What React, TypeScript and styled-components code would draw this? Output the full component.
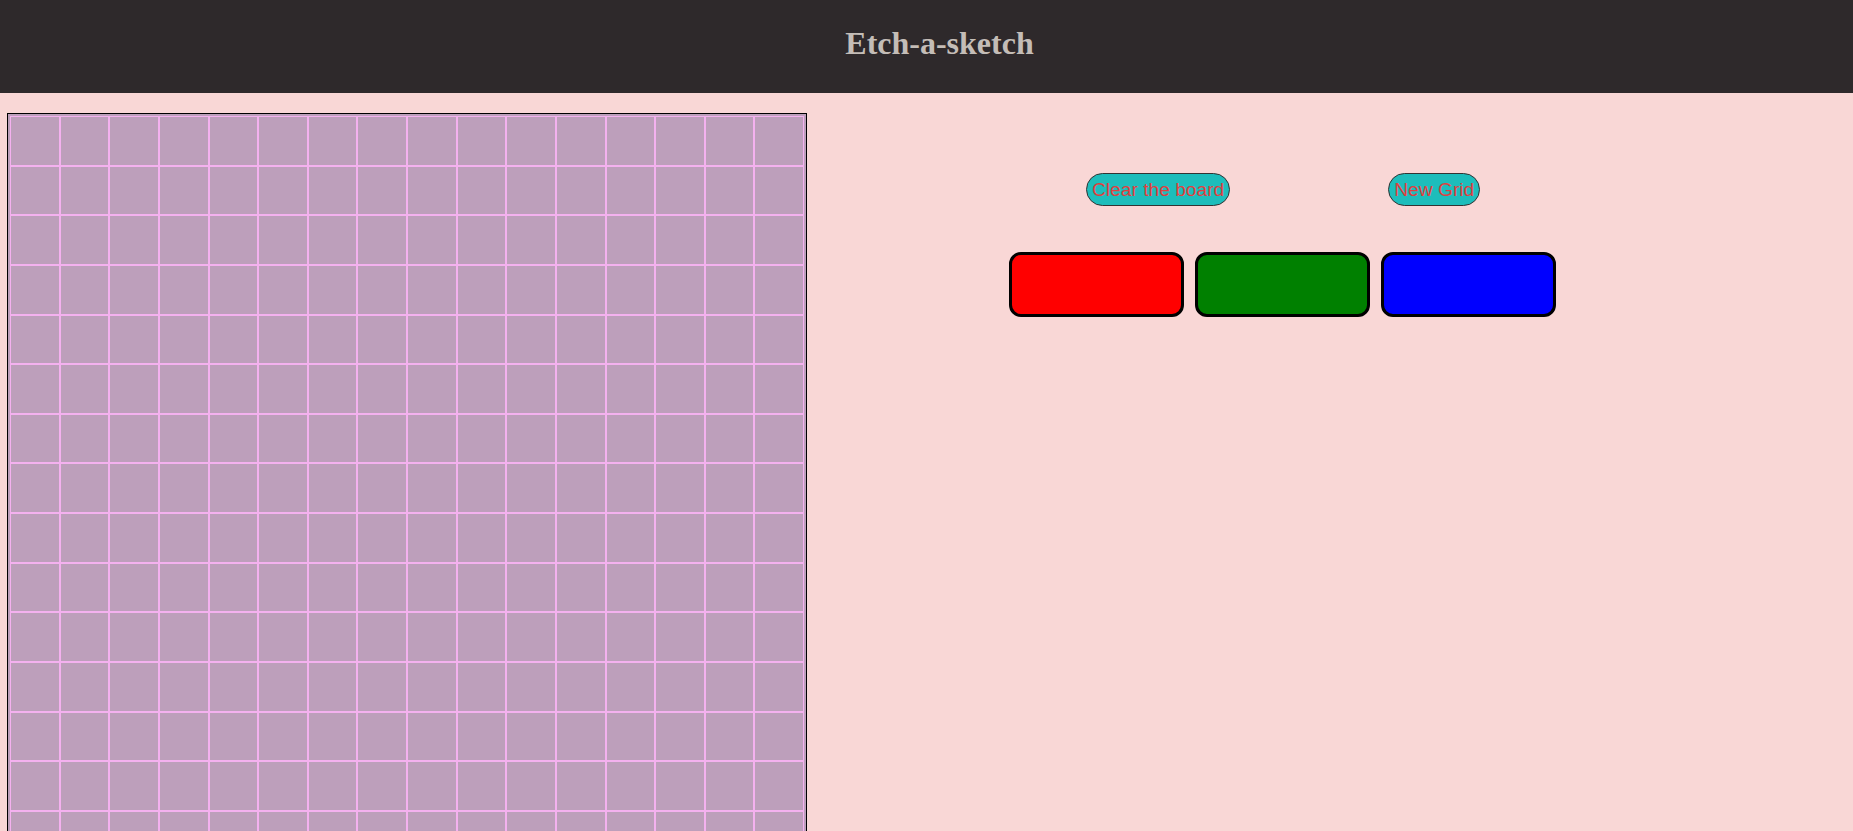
import React from "react";
import styled, { createGlobalStyle } from "styled-components";

const GlobalStyle = createGlobalStyle`
  html, body {
    margin: 0;
    padding: 0;
    background: #f9d7d6;
    overflow: hidden;
  }
  body {
    font-family: "Liberation Serif", "Times New Roman", serif;
  }
`;

const Header = styled.header`
  height: 93px;
  background: #2e292b;
  display: flex;
  justify-content: center;
  align-items: flex-start;
  padding: 25px 0 0 26px;
  box-sizing: border-box;
`;

const Title = styled.h1`
  margin: 0;
  font-family: "Liberation Serif", "Times New Roman", serif;
  font-size: 32px;
  font-weight: bold;
  color: #c4bdb7;
`;

const Main = styled.main`
  display: flex;
  align-items: flex-start;
  padding: 20px 0 0 7px;
`;

const Board = styled.div`
  width: 800px;
  height: 800px;
  flex: none;
  box-sizing: border-box;
  border: 1px solid #000;
  background: #bd9fbb;
  padding: 2px;
`;

const Grid = styled.div`
  width: 794px;
  height: 794px;
  display: grid;
  grid-template-columns: repeat(16, 1fr);
  grid-template-rows: repeat(16, 1fr);
`;

const Cell = styled.div`
  box-sizing: border-box;
  background: #bd9fbb;
  border: 1px solid #f4b1ef;
`;

const Controls = styled.section`
  flex: 1;
  display: flex;
  flex-direction: column;
  align-items: flex-start;
`;

const ActionRow = styled.div`
  display: flex;
  gap: 158px;
  margin: 60px 0 0 279px;
`;

const ActionButton = styled.button`
  font-family: "Liberation Sans", Arial, sans-serif;
  font-size: 19.2px;
  line-height: 21px;
  color: #e0403f;
  background: #1dbdbb;
  border: 1px solid #333;
  border-radius: 999px;
  padding: 5px 5px;
  cursor: pointer;
`;

const ColorRow = styled.div`
  display: flex;
  gap: 11px;
  margin: 46px 0 0 202px;
`;

const ColorButton = styled.button<{ $color: string }>`
  box-sizing: border-box;
  width: 175px;
  height: 65px;
  border: 3px solid #000;
  border-radius: 12px;
  background: ${(p) => p.$color};
  padding: 0;
  cursor: pointer;
`;

const cells = Array.from({ length: 256 }, (_, i) => i);

export default function App() {
  return (
    <>
      <GlobalStyle />
      <Header>
        <Title>Etch-a-sketch</Title>
      </Header>
      <Main>
        <Board>
          <Grid>
            {cells.map((i) => (
              <Cell key={i} />
            ))}
          </Grid>
        </Board>
        <Controls>
          <ActionRow>
            <ActionButton>Clear the board</ActionButton>
            <ActionButton>New Grid</ActionButton>
          </ActionRow>
          <ColorRow>
            <ColorButton $color="#ff0000" aria-label="red" />
            <ColorButton $color="#008000" aria-label="green" />
            <ColorButton $color="#0000ff" aria-label="blue" />
          </ColorRow>
        </Controls>
      </Main>
    </>
  );
}
